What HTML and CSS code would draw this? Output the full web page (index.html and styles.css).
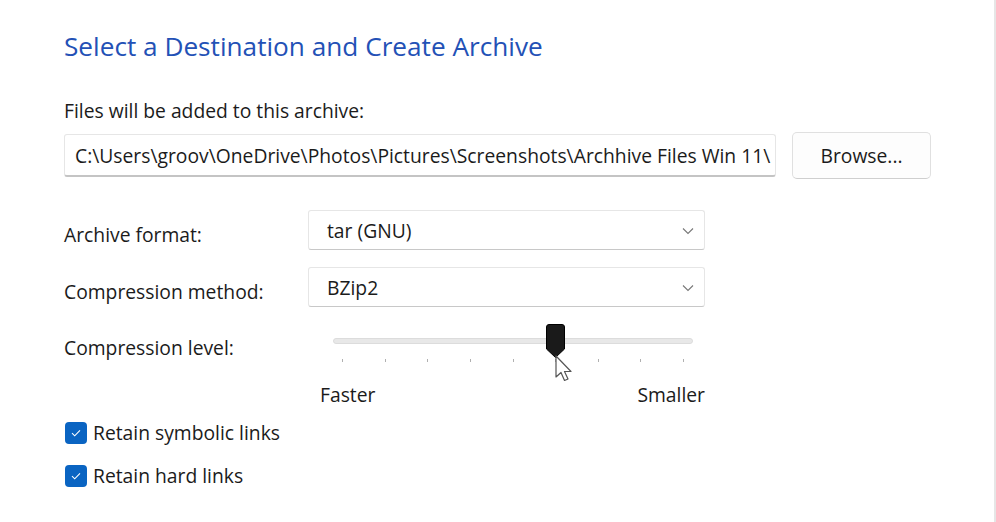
FILE: index.html
```html
<!DOCTYPE html>
<html>
<head>
<meta charset="utf-8">
<link rel="stylesheet" href="styles.css">
</head>
<body>
<div class="dialog">
  <h1 class="title">Select a Destination and Create Archive</h1>
  <div class="field-label">Files will be added to this archive:</div>
  <div class="path-row">
    <div class="path-input"><span class="path-text">C:\Users\groov\OneDrive\Photos\Pictures\Screenshots\Archhive Files Win 11\</span></div>
    <button class="btn">Browse...</button>
  </div>
  <div class="form-grid">
    <div class="row-label">Archive format:</div>
    <div class="select"><span>tar (GNU)</span><svg class="chev" width="12" height="8" viewBox="0 0 12 8"><path d="M1 1.5 L6 6.5 L11 1.5" fill="none" stroke="#777" stroke-width="1.1"/></svg></div>
    <div class="row-label">Compression method:</div>
    <div class="select"><span>BZip2</span><svg class="chev" width="12" height="8" viewBox="0 0 12 8"><path d="M1 1.5 L6 6.5 L11 1.5" fill="none" stroke="#777" stroke-width="1.1"/></svg></div>
    <div class="row-label level-label">Compression level:</div>
    <div class="slider-cell">
      <div class="slider">
        <div class="track"></div>
        <div class="ticks">
          <i></i><i></i><i></i><i></i><i></i><i></i><i></i><i></i><i></i>
        </div>
        <svg class="thumb" width="19" height="34" viewBox="0 0 19 34"><path d="M3 0.5 H16 Q18.5 0.5 18.5 3 V25 L9.5 33.5 L0.5 25 V3 Q0.5 0.5 3 0.5 Z" fill="#1a1a1a" stroke="#000" stroke-width="1"/></svg>
        <svg class="cursor" width="24" height="30" viewBox="0 0 24 30"><path d="M1 1 L1 22 L6 17.5 L9.5 25.5 L13 24 L9.5 16.5 L16 16.5 Z" fill="#fff" stroke="#555" stroke-width="1.2" stroke-linejoin="round"/></svg>
      </div>
      <div class="slider-labels"><span>Faster</span><span>Smaller</span></div>
    </div>
  </div>
  <div class="checks">
    <label class="check"><span class="box"><svg width="12" height="10" viewBox="0 0 12 10"><path d="M2 5.2 L4.7 7.8 L10 2.4" fill="none" stroke="#fff" stroke-width="1.1"/></svg></span><span>Retain symbolic links</span></label>
    <label class="check"><span class="box"><svg width="12" height="10" viewBox="0 0 12 10"><path d="M2 5.2 L4.7 7.8 L10 2.4" fill="none" stroke="#fff" stroke-width="1.1"/></svg></span><span>Retain hard links</span></label>
  </div>
</div>
</body>
</html>
```
FILE: styles.css
```css
html, body {
  margin: 0;
  padding: 0;
  background: #ffffff;
}
body {
  width: 996px;
  height: 522px;
  overflow: hidden;
  font-family: "Open Sans", "Noto Sans", "Liberation Sans", sans-serif;
  font-size: 19.3px;
  color: #1b1b1b;
  box-sizing: border-box;
  border-right: 2px solid #e6e6e6;
}
.dialog {
  padding: 29px 0 0 64px;
}
.title {
  margin: 0;
  font-size: 26.2px;
  font-weight: 400;
  line-height: 34px;
  color: #2351b6;
}
.field-label {
  margin-top: 35px;
  line-height: 26px;
}
.path-row {
  display: flex;
  align-items: center;
  gap: 16px;
  margin-top: 8px;
}
.path-input {
  width: 712px;
  height: 43px;
  box-sizing: border-box;
  border: 1px solid #e6e6e6;
  border-bottom: 2px solid #c4c4c4;
  border-radius: 3px;
  padding: 0 0 0 10px;
  display: flex;
  align-items: center;
  overflow: hidden;
  white-space: nowrap;
}
.path-text {
  flex: none;
}
.btn {
  width: 139px;
  height: 47px;
  background: #fdfdfd;
  border: 1px solid #e0e0e0;
  border-bottom-color: #cfcfcf;
  border-radius: 5px;
  font-family: inherit;
  font-size: inherit;
  color: #1b1b1b;
  padding: 0;
}
.form-grid {
  display: grid;
  grid-template-columns: 244px 397px;
  grid-template-rows: 40px 40px auto;
  row-gap: 17px;
  margin-top: 31px;
}
.row-label {
  display: flex;
  align-items: center;
  line-height: 26px;
  padding-top: 9px;
}
.level-label {
  align-items: flex-start;
  padding-top: 11px;
}
.select {
  box-sizing: border-box;
  border: 1px solid #e6e6e6;
  border-bottom: 1px solid #c8c8c8;
  border-radius: 3px;
  display: flex;
  align-items: center;
  justify-content: space-between;
  padding: 0 10px 0 18px;
}
.chev {
  margin-top: 1px;
}
.slider-cell {
  padding-left: 12px;
}
.slider {
  position: relative;
  width: 360px;
  height: 40px;
  margin-left: 13px;
}
.track {
  position: absolute;
  left: 0;
  right: 0;
  top: 14px;
  height: 6px;
  box-sizing: border-box;
  background: #e8e8e8;
  border: 1px solid #dcdcdc;
  border-radius: 3px;
}
.ticks {
  position: absolute;
  left: 9px;
  right: 9px;
  top: 35px;
  display: flex;
  justify-content: space-between;
}
.ticks i {
  display: block;
  width: 1px;
  height: 3px;
  background: #b0b0b0;
}
.thumb {
  position: absolute;
  left: 213px;
  top: 0;
}
.cursor {
  position: absolute;
  left: 222px;
  top: 31px;
}
.slider-labels {
  display: flex;
  justify-content: space-between;
  width: 385px;
  margin-top: 18px;
  line-height: 26px;
}
.checks {
  display: flex;
  flex-direction: column;
  gap: 17px;
  margin-top: 12px;
}
.check {
  display: flex;
  align-items: center;
  gap: 6px;
  line-height: 26px;
  padding-left: 1px;
}
.box {
  width: 22px;
  height: 22px;
  border-radius: 4px;
  background: #0a64c2;
  display: flex;
  align-items: center;
  justify-content: center;
}
```
